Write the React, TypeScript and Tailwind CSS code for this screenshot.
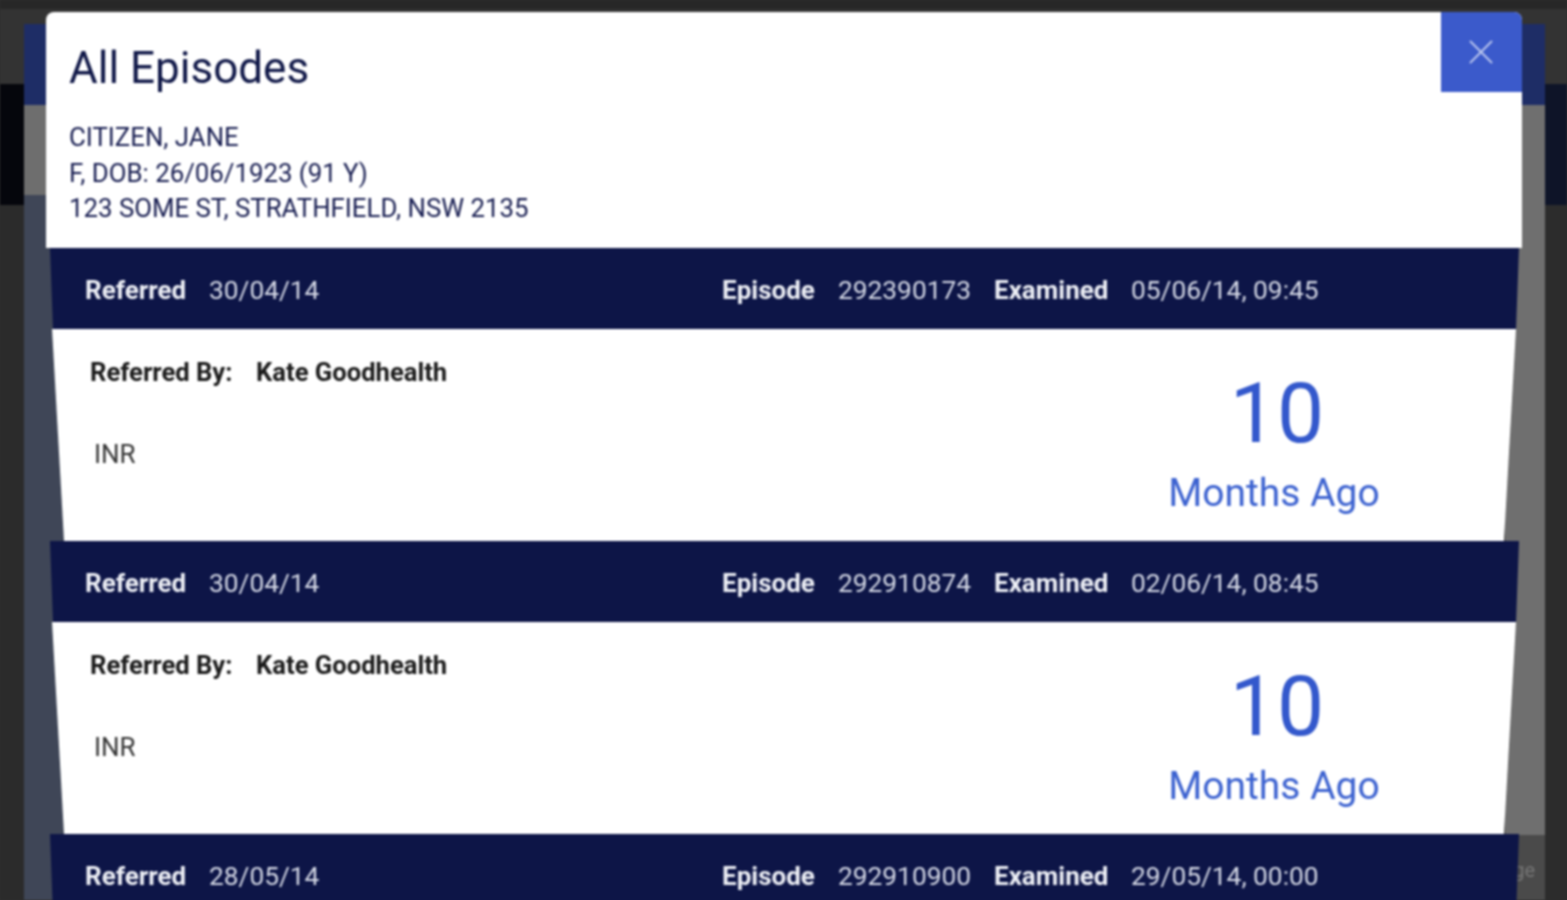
import React from "react";
import { X } from "lucide-react";

interface Episode {
  referred: string;
  id: string;
  examined: string;
}

const episodes: Episode[] = [
  { referred: "30/04/14", id: "292390173", examined: "05/06/14, 09:45" },
  { referred: "30/04/14", id: "292910874", examined: "02/06/14, 08:45" },
  { referred: "28/05/14", id: "292910900", examined: "29/05/14, 00:00" },
];

function EpisodeBar({ episode }: { episode: Episode }) {
  return (
    <div className="h-[81px] shrink-0 bg-[#0d1547] flex items-center pl-[35px] pt-[3px] text-[26.3px] leading-[36px] text-[#d5d9e6] [clip-path:polygon(0_0,100%_0,calc(100%-3px)_100%,3px_100%)]">
      <div className="flex items-baseline">
        <div className="w-[637px] flex items-baseline shrink-0">
          <span className="w-[124px] text-[26px] font-bold text-[#eef0f6]">Referred</span>
          <span>{episode.referred}</span>
        </div>
        <span className="w-[116px] shrink-0 text-[26px] font-bold text-[#eef0f6]">Episode</span>
        <span className="w-[156px] shrink-0">{episode.id}</span>
        <span className="w-[137px] shrink-0 text-[26px] font-bold text-[#eef0f6]">Examined</span>
        <span>{episode.examined}</span>
      </div>
    </div>
  );
}

function EpisodeBody() {
  return (
    <div className="h-[212px] shrink-0 bg-white flex justify-between [clip-path:polygon(2px_0,calc(100%-3px)_0,calc(100%-15px)_100%,14px_100%)]">
      <div className="pl-[40px] pt-[25px]">
        <div className="flex text-[25.6px] leading-[36px] font-bold text-[#1a1a1a]">
          <span className="w-[166px]">Referred By:</span>
          <span>Kate Goodhealth</span>
        </div>
        <div className="pl-[4px] pt-[46px] text-[26px] leading-[36px] text-[#333333]">INR</div>
      </div>
      <div className="w-[216px] mr-[137px] flex flex-col items-center text-[#3358cc]">
        <div className="mt-[37px] pl-[6px] text-[84px] leading-[96px]">10</div>
        <div className="mt-[9px] text-[39px] leading-[44px] text-[#3c62d0]">Months Ago</div>
      </div>
    </div>
  );
}

export default function App() {
  return (
    <div className="h-[900px] w-[1567px] overflow-hidden bg-[#2f2f2f]">
      <div className="relative h-[900px] w-[1567px] font-['Roboto',sans-serif] blur-[0.8px]">
        {/* Page behind the dimmed overlay */}
        <div className="h-full flex flex-col">
          <div className="h-[9px] shrink-0 bg-[#272727]" />
          <div className="flex-1 flex">
            <div className="w-[24px] flex flex-col">
              <div className="h-[75px] bg-[#333333]" />
              <div className="h-[121px] bg-[#05060c]" />
              <div className="flex-1 bg-[#2b2b2b]" />
            </div>
            <div className="w-[1521px] flex flex-col pt-[15px] bg-[#333333]">
              <div className="h-[81px] bg-[#1e2d66]" />
              <div className="flex-1 flex justify-between">
                <div className="w-[40px] flex flex-col">
                  <div className="h-[90px] bg-[#6e6e6e]" />
                  <div className="flex-1 bg-[#3f4657]" />
                </div>
                <div className="w-[40px] flex flex-col">
                  <div className="h-[730px] bg-[#6f6f6f]" />
                  <div className="flex-1 bg-[#4a4a4a] flex justify-end pr-[10px] pt-[20px] text-[20px] text-[#767676]">ge</div>
                </div>
              </div>
            </div>
            <div className="flex-1 flex flex-col">
              <div className="h-[75px] bg-[#333333]" />
              <div className="h-[121px] bg-[#0e1428]" />
              <div className="flex-1 bg-[#2c2c2c]" />
            </div>
          </div>
        </div>

        {/* Modal */}
        <div className="absolute left-[46px] top-[12px] w-[1476px]">
          <div className="relative h-[236px] bg-white rounded-t-[8px] pl-[23px] pt-[29px] text-[#101848]">
            <h1 className="text-[44px] leading-[54px]">All Episodes</h1>
            <div className="mt-[25px] text-[25.8px] leading-[35.6px] text-[#161c50]">
              <div>CITIZEN, JANE</div>
              <div>F, DOB: 26/06/1923 (91 Y)</div>
              <div>123 SOME ST, STRATHFIELD, NSW 2135</div>
            </div>
            <button className="absolute right-0 top-0 w-[81px] h-[80px] pr-[2px] bg-[#3b5acb] rounded-tr-[8px] flex items-center justify-center text-[#b9c5ee]">
              <X size={42} strokeWidth={1.1} />
            </button>
          </div>
          <div className="ml-[4px] w-[1469px] flex flex-col">
            {episodes.map((episode, i) => (
              <React.Fragment key={episode.id}>
                <EpisodeBar episode={episode} />
                {i < episodes.length - 1 && <EpisodeBody />}
              </React.Fragment>
            ))}
          </div>
        </div>
      </div>
    </div>
  );
}
